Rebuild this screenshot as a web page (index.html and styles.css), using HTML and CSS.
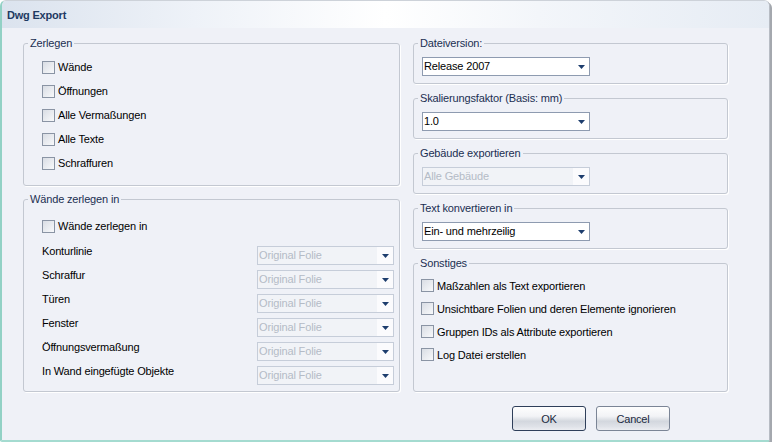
FILE: index.html
```html
<!DOCTYPE html>
<html lang="de">
<head>
  <meta charset="UTF-8" />
  <meta name="viewport" content="width=device-width, initial-scale=1.0"/>
  <title>Dwg Export</title>
  <link rel="stylesheet" href="styles.css">
</head>
<body>
  <div class="window">
    <div class="titlebar">Dwg Export</div>

    <div class="content">
      <div class="column left">
        <fieldset class="group zerlegen">
          <legend>Zerlegen</legend>
          <label class="check"><span class="box"></span>Wände</label>
          <label class="check"><span class="box"></span>Öffnungen</label>
          <label class="check"><span class="box"></span>Alle Vermaßungen</label>
          <label class="check"><span class="box"></span>Alle Texte</label>
          <label class="check"><span class="box"></span>Schraffuren</label>
        </fieldset>

        <fieldset class="group walls">
          <legend>Wände zerlegen in</legend>
          <label class="check first"><span class="box"></span>Wände zerlegen in</label>
          <div class="row">
            <span class="row-label">Konturlinie</span>
            <div class="combo disabled"><span class="combo-text">Original Folie</span><span class="combo-btn"><svg width="7" height="4" viewBox="0 0 7 4"><path d="M0 0h7L3.5 4z"/></svg></span></div>
          </div>
          <div class="row">
            <span class="row-label">Schraffur</span>
            <div class="combo disabled"><span class="combo-text">Original Folie</span><span class="combo-btn"><svg width="7" height="4" viewBox="0 0 7 4"><path d="M0 0h7L3.5 4z"/></svg></span></div>
          </div>
          <div class="row">
            <span class="row-label">Türen</span>
            <div class="combo disabled"><span class="combo-text">Original Folie</span><span class="combo-btn"><svg width="7" height="4" viewBox="0 0 7 4"><path d="M0 0h7L3.5 4z"/></svg></span></div>
          </div>
          <div class="row">
            <span class="row-label">Fenster</span>
            <div class="combo disabled"><span class="combo-text">Original Folie</span><span class="combo-btn"><svg width="7" height="4" viewBox="0 0 7 4"><path d="M0 0h7L3.5 4z"/></svg></span></div>
          </div>
          <div class="row">
            <span class="row-label">Öffnungsvermaßung</span>
            <div class="combo disabled"><span class="combo-text">Original Folie</span><span class="combo-btn"><svg width="7" height="4" viewBox="0 0 7 4"><path d="M0 0h7L3.5 4z"/></svg></span></div>
          </div>
          <div class="row">
            <span class="row-label">In Wand eingefügte Objekte</span>
            <div class="combo disabled"><span class="combo-text">Original Folie</span><span class="combo-btn"><svg width="7" height="4" viewBox="0 0 7 4"><path d="M0 0h7L3.5 4z"/></svg></span></div>
          </div>
        </fieldset>
      </div>

      <div class="column right">
        <fieldset class="group small">
          <legend>Dateiversion:</legend>
          <div class="combo wide"><span class="combo-text">Release 2007</span><span class="combo-btn"><svg width="7" height="4" viewBox="0 0 7 4"><path d="M0 0h7L3.5 4z"/></svg></span></div>
        </fieldset>

        <fieldset class="group small">
          <legend>Skalierungsfaktor (Basis: mm)</legend>
          <div class="combo wide"><span class="combo-text">1.0</span><span class="combo-btn"><svg width="7" height="4" viewBox="0 0 7 4"><path d="M0 0h7L3.5 4z"/></svg></span></div>
        </fieldset>

        <fieldset class="group small">
          <legend>Gebäude exportieren</legend>
          <div class="combo wide disabled"><span class="combo-text">Alle Gebäude</span><span class="combo-btn"><svg width="7" height="4" viewBox="0 0 7 4"><path d="M0 0h7L3.5 4z"/></svg></span></div>
        </fieldset>

        <fieldset class="group small">
          <legend>Text konvertieren in</legend>
          <div class="combo wide"><span class="combo-text">Ein- und mehrzeilig</span><span class="combo-btn"><svg width="7" height="4" viewBox="0 0 7 4"><path d="M0 0h7L3.5 4z"/></svg></span></div>
        </fieldset>

        <fieldset class="group misc">
          <legend>Sonstiges</legend>
          <label class="check"><span class="box"></span>Maßzahlen als Text exportieren</label>
          <label class="check"><span class="box"></span>Unsichtbare Folien und deren Elemente ignorieren</label>
          <label class="check"><span class="box"></span>Gruppen IDs als Attribute exportieren</label>
          <label class="check"><span class="box"></span>Log Datei erstellen</label>
        </fieldset>
      </div>
    </div>

    <div class="buttons">
      <button class="btn default">OK</button>
      <button class="btn">Cancel</button>
    </div>
  </div>
</body>
</html>
```

FILE: styles.css
```css
body {
  margin: 0;
  background: #ffffff;
  font-family: 'Liberation Sans', Arial, sans-serif;
  font-size: 11px;
  letter-spacing: -0.15px;
  color: #000;
}

.window {
  width: 767px;
  height: 439px;
  background: #eff1f7;
  border-top: 1px solid #cdd2d9;
  border-right: 1px solid #b7bcc4;
  border-left: 2px solid #92d1c5;
  border-bottom: 2px solid #a4dbd0;
  border-radius: 6px 6px 2px 2px;
  box-shadow: 2px 2px 0 #a4a8ae;
  overflow: hidden;
}

.titlebar {
  height: 19px;
  padding: 8px 0 0 5px;
  line-height: 13px;
  font-weight: bold;
  letter-spacing: -0.2px;
  color: #1e3a62;
  background: linear-gradient(to right, #dbe3ee 0%, #eef2f8 25%, #ffffff 50%, #f3f6fa 70%, #e6ecf4 100%);
}

.content {
  display: flex;
  gap: 13px;
  padding: 9px 0 0 21px;
}

.column {
  display: flex;
  flex-direction: column;
}

.column.left {
  width: 377px;
}

.column.right {
  width: 315px;
  gap: 8px;
}

fieldset.group {
  margin: 0;
  padding: 0;
  min-width: 0;
  border: 1px solid #c3c8d1;
  border-radius: 3px;
  box-shadow: 1px 1px 0 #ffffff;
}

legend {
  margin-left: 4px;
  padding: 0 2px;
  line-height: 13px;
  color: #1b2f52;
}

.check {
  display: flex;
  align-items: center;
  height: 24px;
  padding-left: 18px;
}

.box {
  width: 11px;
  height: 11px;
  margin-right: 3px;
  border: 1px solid #8a94a4;
  background: linear-gradient(135deg, #d9dde4, #f8f9fb);
  flex-shrink: 0;
}

.zerlegen {
  padding: 5px 0 10px 0 !important;
}

.walls {
  margin-top: 7px !important;
  padding: 8px 5px 4px 0 !important;
}

.walls .first {
  margin-bottom: 5px;
}

.row {
  display: flex;
  height: 24px;
  padding-left: 18px;
}

.row-label {
  flex: 1;
  padding-top: 2px;
  line-height: 13px;
}

.combo {
  display: flex;
  box-sizing: border-box;
  width: 137px;
  height: 19px;
  margin-top: 3px;
  border: 1px solid #8e9bb0;
  background: #ffffff;
}

.combo.wide {
  width: 168px;
  margin: 0 0 0 8px;
}

.combo-text {
  flex: 1;
  padding-left: 1px;
  line-height: 17px;
  white-space: nowrap;
  overflow: hidden;
}

.combo-btn {
  width: 16px;
  display: flex;
  justify-content: center;
  padding-top: 7px;
  box-sizing: border-box;
}

.combo-btn svg {
  fill: #1d3d6d;
}

.combo.disabled {
  border-color: #c6cdd9;
  background: #f1f3f7;
  color: #b4bbc6;
}

.combo.disabled .combo-btn {
  background: #fbfbfd;
}

.small {
  height: 47px;
  box-sizing: border-box;
  padding: 7px 0 7px 0 !important;
}

.misc {
  flex: 1;
  padding: 4px 0 0 0 !important;
}

.misc .check {
  height: 23px;
  padding-left: 7px;
}

.buttons {
  display: flex;
  justify-content: flex-end;
  gap: 10px;
  padding: 14px 99px 0 0;
}

.btn {
  width: 74px;
  height: 25px;
  padding: 0;
  font-family: inherit;
  font-size: 11px;
  letter-spacing: -0.2px;
  color: #1a2940;
  border: 1px solid #7b8596;
  border-radius: 3px;
  background: linear-gradient(#fefefe 0%, #f2f3f6 40%, #d3d7de 62%, #dfe2e8 85%, #eceef2 100%);
}

.btn.default {
  border-color: #2f3f5a;
}
```
